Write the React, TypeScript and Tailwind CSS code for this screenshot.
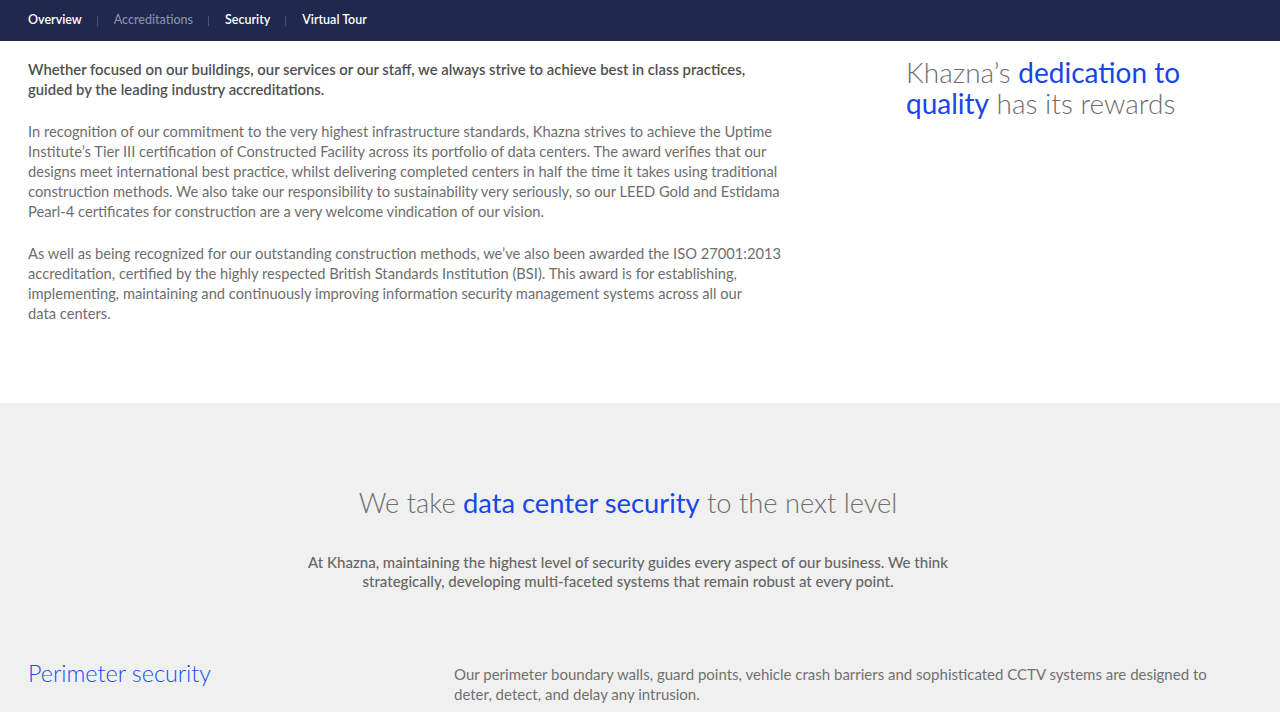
import React from 'react';

const navItems = [
  { label: 'Overview', active: true },
  { label: 'Accreditations', active: false },
  { label: 'Security', active: true },
  { label: 'Virtual Tour', active: true },
];

const font = { fontFamily: 'Lato, "Open Sans", sans-serif' };

export default function App() {
  return (
    <div className="min-h-screen bg-white text-[#666]" style={font}>
      {/* sub navigation */}
      <nav className="h-[41px] bg-[#20284d] flex items-center px-[28px]">
        {navItems.map((item, i) => (
          <div key={item.label} className="flex items-center">
            {i > 0 && <span className="ml-[15px] mr-[16px] h-[10px] w-px bg-[#4b5276]" />}
            <span className={item.active ? 'text-[12.5px] font-semibold text-white' : 'text-[12.5px] font-medium text-[#8a8fa8]'}>
              {item.label}
            </span>
          </div>
        ))}
      </nav>

      {/* accreditations */}
      <section className="flex px-[28px] pt-[18px] pb-[80px]">
        <div className="w-[878px] pr-[100px]">
          <p className="text-[14.85px] leading-[20px] font-semibold text-[#505050]">
            Whether focused on our buildings, our services or our staff, we always strive to achieve best in class practices,<br />
            guided by the leading industry accreditations.
          </p>
          <p className="mt-[22px] text-[14.7px] leading-[20px] text-[#6e6e6e]">
            In recognition of our commitment to the very highest infrastructure standards, Khazna strives to achieve the Uptime<br />
            Institute’s Tier III certification of Constructed Facility across its portfolio of data centers. The award verifies that our<br />
            designs meet international best practice, whilst delivering completed centers in half the time it takes using traditional<br />
            construction methods. We also take our responsibility to sustainability very seriously, so our LEED Gold and Estidama<br />
            Pearl-4 certificates for construction are a very welcome vindication of our vision.
          </p>
          <p className="mt-[22px] text-[14.7px] leading-[20px] text-[#6e6e6e]">
            As well as being recognized for our outstanding construction methods, we’ve also been awarded the ISO 27001:2013<br />
            accreditation, certified by the highly respected British Standards Institution (BSI). This award is for establishing,<br />
            implementing, maintaining and continuously improving information security management systems across all our<br />
            data centers.
          </p>
        </div>
        <div>
          <h2 className="text-[28px] leading-[31px] font-light text-[#6e6e6e] -mt-[2px]">
            Khazna’s <span className="font-normal text-[#1a45e8]">dedication to</span>
            <br />
            <span className="font-normal text-[#1a45e8]">quality</span> has its rewards
          </h2>
        </div>
      </section>

      {/* security */}
      <section className="bg-[#f0f0f0] pl-[28px] pr-[52px] pt-[84px] pb-[40px]">
        <h2 className="text-center text-[27.3px] leading-[32px] font-light text-[#6e6e6e]">
          We take <span className="font-normal text-[#1a45e8]">data center security</span> to the next level
        </h2>
        <p className="mt-[34px] text-center text-[15px] leading-[19px] font-medium text-[#666]">
          At Khazna, maintaining the highest level of security guides every aspect of our business. We think<br />
          strategically, developing multi-faceted systems that remain robust at every point.
        </p>

        <div className="mt-[73px] flex">
          <h3 className="w-[426px] text-[23.4px] leading-[28px] font-light text-[#1a4cf0] -mt-[5px]">Perimeter security</h3>
          <p className="text-[15px] leading-[20px] text-[#707070]">
            Our perimeter boundary walls, guard points, vehicle crash barriers and sophisticated CCTV systems are designed to<br />
            deter, detect, and delay any intrusion.
          </p>
        </div>
      </section>
    </div>
  );
}
